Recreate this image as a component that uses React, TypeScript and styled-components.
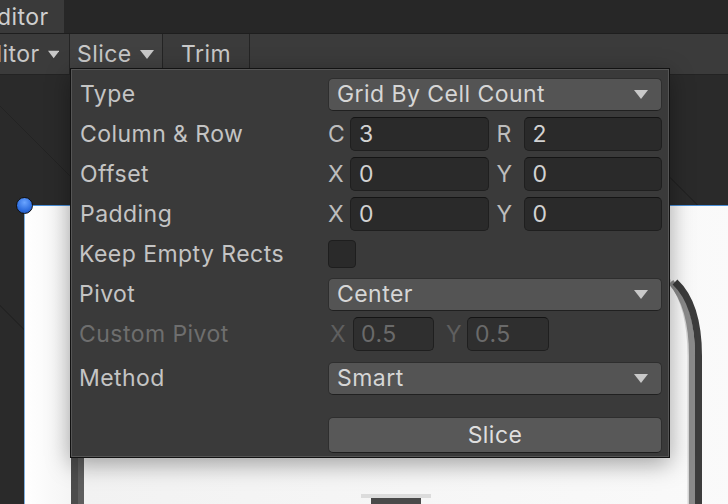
import React from "react";
import styled, { createGlobalStyle } from "styled-components";

const GlobalStyle = createGlobalStyle`
  html, body {
    margin: 0;
    padding: 0;
    background: #282828;
    overflow: hidden;
  }
  body {
    font-family: Inter, "Noto Sans", "Liberation Sans", sans-serif;
  }
`;

const Arrow = () => (
  <svg width="14" height="9" viewBox="0 0 14 9">
    <path d="M0 0 L14 0 L7 9 Z" fill="#c8c8c8" />
  </svg>
);

export default function App() {
  return (
    <>
      <GlobalStyle />
      <Page>
        <TabStrip>
          <Tab>ditor</Tab>
        </TabStrip>
        <Toolbar>
          <ToolButton $width={70}>
            ditor <Arrow />
          </ToolButton>
          <ToolButton $width={93} $lit>
            Slice <Arrow />
          </ToolButton>
          <ToolButton $width={87} $center>
            Trim
          </ToolButton>
        </Toolbar>
        <Canvas>
          <Sprite>
            <svg width="704" height="300" viewBox="0 0 704 300">
              <rect x="46" y="0" width="7" height="300" fill="#4c4c4c" shapeRendering="crispEdges" />
              <rect x="53" y="0" width="6" height="300" fill="#5e5e5e" shapeRendering="crispEdges" />
              <path d="M644 74 Q 664 100 664 150 L 664 300" stroke="#d4d4d4" strokeWidth="3" fill="none" />
              <path d="M646 76 Q 667 100 667 150 L 667 300" stroke="#8a8a8a" strokeWidth="6" fill="none" />
              <path d="M650 76 Q 673.5 98 673.5 150 L 673.5 300" stroke="#3c3c3c" strokeWidth="7" fill="none" />
              <rect x="346" y="292" width="50" height="8" fill="#4a4a4a" shapeRendering="crispEdges" />
              <rect x="336" y="288" width="70" height="4" fill="#dcdcdc" shapeRendering="crispEdges" />
            </svg>
            <Handle />
          </Sprite>
        </Canvas>
        <Popup>
          <Row>
            <Label>Type</Label>
            <Dropdown>
              Grid By Cell Count <Arrow />
            </Dropdown>
          </Row>
          <Row>
            <Label>Column &amp; Row</Label>
            <Pair>
              <AxisLabel>C</AxisLabel>
              <Field>3</Field>
              <AxisLabel $pad={8}>R</AxisLabel>
              <Field>2</Field>
            </Pair>
          </Row>
          <Row>
            <Label>Offset</Label>
            <Pair>
              <AxisLabel>X</AxisLabel>
              <Field>0</Field>
              <AxisLabel $pad={8}>Y</AxisLabel>
              <Field>0</Field>
            </Pair>
          </Row>
          <Row>
            <Label>Padding</Label>
            <Pair>
              <AxisLabel>X</AxisLabel>
              <Field>0</Field>
              <AxisLabel $pad={8}>Y</AxisLabel>
              <Field>0</Field>
            </Pair>
          </Row>
          <Row>
            <Label $nudge={-1}>Keep Empty Rects</Label>
            <Checkbox />
          </Row>
          <Row>
            <Label $nudge={-1}>Pivot</Label>
            <Dropdown>
              Center <Arrow />
            </Dropdown>
          </Row>
          <Row>
            <Label $dim $nudge={-1}>Custom Pivot</Label>
            <SmallPair>
              <AxisLabel $dim $pad={2}>X</AxisLabel>
              <Field $dim>0.5</Field>
              <AxisLabel $dim $pad={12}>Y</AxisLabel>
              <Field $dim>0.5</Field>
            </SmallPair>
          </Row>
          <Row $gap={4}>
            <Label $nudge={-1}>Method</Label>
            <Dropdown>
              Smart <Arrow />
            </Dropdown>
          </Row>
          <ButtonRow>
            <SliceButton>Slice</SliceButton>
          </ButtonRow>
        </Popup>
      </Page>
    </>
  );
}

const Page = styled.div`
  position: relative;
  width: 728px;
  height: 504px;
  display: flex;
  flex-direction: column;
  color: #c4c4c4;
  font-size: 23px;
  letter-spacing: 0.45px;
`;

const TabStrip = styled.div`
  height: 33px;
  display: flex;
  background: #272727;
  border-bottom: 1px solid #1e1e1e;
`;

const Tab = styled.div`
  width: 72px;
  display: flex;
  align-items: center;
  background: #3a3a3a;
  color: #cfcfcf;
  margin-left: -8px;
  padding-left: 5px;
  box-sizing: border-box;
`;

const Toolbar = styled.div`
  height: 40px;
  display: flex;
  background: #3b3b3b;
  border-bottom: 1px solid #232323;
`;

const ToolButton = styled.div<{ $width: number; $lit?: boolean; $center?: boolean }>`
  width: ${(p) => p.$width}px;
  display: flex;
  align-items: center;
  justify-content: ${(p) => (p.$center ? "center" : "flex-start")};
  gap: 8px;
  padding-left: ${(p) => (p.$center ? 0 : 7)}px;
  box-sizing: border-box;
  border-right: 1px solid #242424;
  background: ${(p) => (p.$lit ? "#414141" : "#3b3b3b")};
  color: #c8c8c8;
  &:first-child {
    padding-left: 0;
    margin-left: -12px;
    width: ${(p) => p.$width + 12}px;
    justify-content: flex-end;
    padding-right: 10px;
  }
`;

const Canvas = styled.div`
  position: relative;
  flex: 1;
  overflow: hidden;
  background-color: #2a2a2a;
  background-image: repeating-linear-gradient(
    45deg,
    transparent 0px,
    transparent 140px,
    #232323 140px,
    #232323 141px
  );
`;

const Sprite = styled.div`
  position: absolute;
  left: 24px;
  top: 130px;
  width: 720px;
  height: 320px;
  background: linear-gradient(90deg, #ffffff 0%, #f2f2f2 8%, #fafafa 100%);
  border-top: 1px solid #4a8fd8;
  border-left: 1px solid #7fb0e0;
`;

const Handle = styled.div`
  position: absolute;
  left: -9px;
  top: -9px;
  width: 15px;
  height: 15px;
  border-radius: 50%;
  background: radial-gradient(circle at 50% 30%, #6aa4ff 0%, #2f6fe0 60%, #1f4fb0 100%);
  border: 1px solid #111;
`;

const Popup = styled.div`
  position: absolute;
  left: 70px;
  top: 68px;
  width: 600px;
  height: 390px;
  box-sizing: border-box;
  background: #3a3a3a;
  border: 1px solid #121212;
  box-shadow: inset 0 0 0 1px #555555, 0 6px 22px rgba(0, 0, 0, 0.35);
  padding: 5px 7px 4px 9px;
  display: flex;
  flex-direction: column;
`;

const Row = styled.div<{ $gap?: number }>`
  height: 40px;
  margin-top: ${(p) => p.$gap ?? 0}px;
  display: grid;
  grid-template-columns: 248px 334px;
  align-items: center;
`;

const Label = styled.div<{ $dim?: boolean; $nudge?: number }>`
  color: ${(p) => (p.$dim ? "#6e6e6e" : "#c4c4c4")};
  white-space: nowrap;
  margin-left: ${(p) => p.$nudge ?? 0}px;
`;

const Dropdown = styled.div`
  height: 33px;
  box-sizing: border-box;
  border-radius: 5px;
  background: #545454;
  border: 1px solid #2e2e2e;
  border-bottom-color: #202020;
  display: flex;
  align-items: center;
  justify-content: space-between;
  padding: 0 13px 0 8px;
  color: #d6d6d6;
`;

const Pair = styled.div`
  display: grid;
  grid-template-columns: 22px 1fr 35px 1fr;
  align-items: center;
`;

const SmallPair = styled.div`
  display: grid;
  grid-template-columns: 25px 81px 33px 82px;
  align-items: center;
`;

const AxisLabel = styled.div<{ $dim?: boolean; $pad?: number }>`
  color: ${(p) => (p.$dim ? "#5f5f5f" : "#bdbdbd")};
  padding-left: ${(p) => p.$pad ?? 0}px;
`;

const Field = styled.div<{ $dim?: boolean }>`
  height: 34px;
  box-sizing: border-box;
  border-radius: 5px;
  background: ${(p) => (p.$dim ? "#2f2f2f" : "#2a2a2a")};
  border: 1px solid #1f1f1f;
  border-top-color: #141414;
  display: flex;
  align-items: center;
  padding-left: ${(p) => (p.$dim ? 7 : 8)}px;
  color: ${(p) => (p.$dim ? "#6a6a6a" : "#d2d2d2")};
`;

const Checkbox = styled.div`
  width: 28px;
  height: 28px;
  box-sizing: border-box;
  border-radius: 4px;
  background: #2a2a2a;
  border: 1px solid #1e1e1e;
`;

const ButtonRow = styled.div`
  margin-top: 19px;
  display: grid;
  grid-template-columns: 248px 334px;
`;

const SliceButton = styled.div`
  grid-column: 2;
  height: 36px;
  box-sizing: border-box;
  border-radius: 5px;
  background: #585858;
  border: 1px solid #2e2e2e;
  border-bottom-color: #1e1e1e;
  display: flex;
  align-items: center;
  justify-content: center;
  color: #dedede;
`;
